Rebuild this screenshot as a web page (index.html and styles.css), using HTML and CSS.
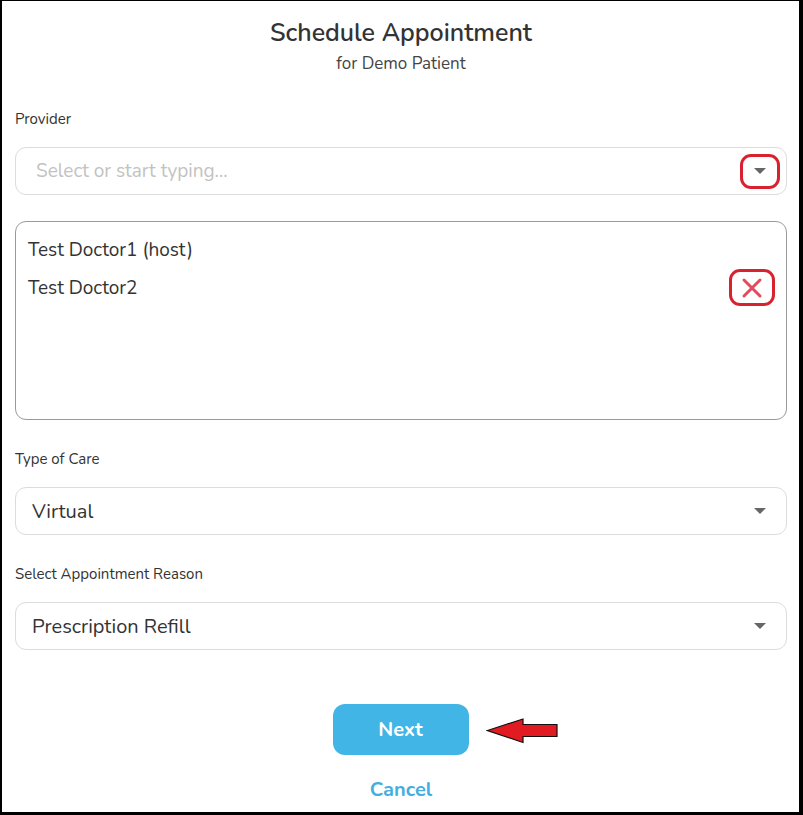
FILE: index.html
```html
<!DOCTYPE html>
<html>
<head>
<meta charset="utf-8">
<link rel="stylesheet" href="styles.css">
</head>
<body>
<div class="frame">
  <div class="panel">
    <header class="head">
      <h1 class="title">Schedule Appointment</h1>
      <p class="subtitle">for Demo Patient</p>
    </header>

    <div class="field field-first">
      <label class="label">Provider</label>
      <div class="select">
        <span class="placeholder">Select or start typing...</span>
        <span class="mark caret-mark"><span class="caret"></span></span>
      </div>
    </div>

    <div class="listbox">
      <div class="item">Test Doctor1 (host)</div>
      <div class="item item-removable">
        <span>Test Doctor2</span>
        <span class="mark x-mark">
          <svg width="22" height="22" viewBox="0 0 22 22"><path d="M3 3 L19 19 M19 3 L3 19" stroke="#e34a5b" stroke-width="3" stroke-linecap="round"/></svg>
        </span>
      </div>
    </div>

    <div class="field">
      <label class="label">Type of Care</label>
      <div class="select">
        <span class="value">Virtual</span>
        <span class="caret"></span>
      </div>
    </div>

    <div class="field">
      <label class="label">Select Appointment Reason</label>
      <div class="select">
        <span class="value">Prescription Refill</span>
        <span class="caret"></span>
      </div>
    </div>

    <div class="actions">
      <div class="next-row">
        <button class="btn-next">Next</button>
        <svg class="arrow" width="74" height="28" viewBox="0 0 74 28"><polygon points="1.5,13.5 37,2 37,7.5 71,7.5 71,19.5 37,19.5 37,25.5" fill="#e21b23" stroke="#111" stroke-width="1.2" stroke-linejoin="miter"/></svg>
      </div>
      <a class="cancel">Cancel</a>
    </div>
  </div>
</div>
</body>
</html>
```

FILE: styles.css
```css
* { box-sizing: border-box; }
html, body { margin: 0; padding: 0; }
body {
  background: #000;
  font-family: "Nunito", Lato, "Open Sans", sans-serif;
  color: #333;
}
.frame {
  width: 803px;
  height: 815px;
  padding: 1px 4px 3px 2px;
}
.panel {
  background: #fff;
  height: 100%;
  padding: 0 12px 0 13px;
  display: flex;
  flex-direction: column;
}
.head { text-align: center; padding-top: 17px; }
.title {
  margin: 0;
  font-size: 25px;
  font-weight: 600;
  line-height: 30px;
  color: #333;
}
.subtitle {
  margin: 6px 0 0;
  font-size: 17px;
  line-height: 20px;
  color: #444;
}
.field { display: flex; flex-direction: column; }
.label {
  font-size: 15px;
  line-height: 18px;
  color: #333;
  margin-top: 30px;
  margin-bottom: 19px;
}
.field-first .label { margin-top: 36px; margin-bottom: 19px; }
.select {
  height: 48px;
  border: 1px solid #dcdcdc;
  border-radius: 11px;
  display: flex;
  align-items: center;
  justify-content: space-between;
  padding: 0 20px 0 16px;
}
.placeholder {
  font-size: 19px;
  color: #c2c2c2;
  padding-left: 4px;
}
.value { font-size: 20px; color: #333; }
.caret {
  width: 0; height: 0;
  border-left: 6px solid transparent;
  border-right: 6px solid transparent;
  border-top: 6px solid #666;
}
.mark {
  border: 3px solid #d9222f;
  border-radius: 11px;
  display: flex;
  align-items: center;
  justify-content: center;
}
.caret-mark {
  width: 40px;
  height: 35px;
  margin-right: -14px;
}
.listbox {
  margin-top: 26px;
  height: 199px;
  border: 1px solid #9a9a9a;
  border-radius: 11px;
  padding: 13px 11px 0 12px;
}
.item {
  font-size: 19px;
  line-height: 30px;
  height: 30px;
  color: #333;
  margin-bottom: 8px;
}
.item-removable {
  display: flex;
  align-items: center;
  justify-content: space-between;
}
.x-mark {
  width: 46px;
  height: 37px;
  margin: -4px 0 -3px;
}
.actions {
  display: flex;
  flex-direction: column;
  align-items: center;
  margin-top: 54px;
}
.next-row {
  display: flex;
  align-items: center;
  margin-left: 90px;
}
.btn-next {
  width: 136px;
  height: 51px;
  background: #41b6e6;
  color: #fff;
  border: none;
  border-radius: 12px;
  font-family: inherit;
  font-size: 20px;
  font-weight: 700;
}
.arrow { margin-left: 17px; margin-top: 2px; }
.cancel {
  margin-top: 21px;
  font-size: 20px;
  font-weight: 700;
  color: #45aee0;
}
```
